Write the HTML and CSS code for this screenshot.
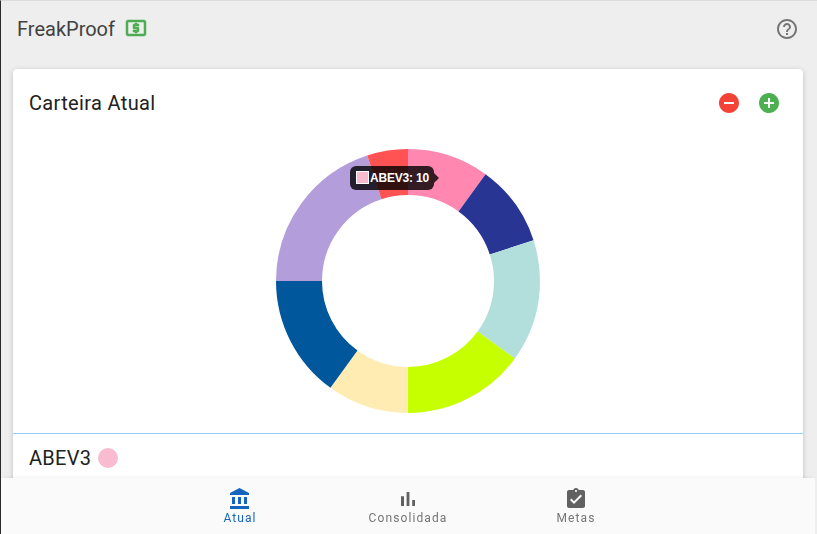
FILE: index.html
```html
<!DOCTYPE html>
<html lang="pt-BR">
<head>
  <meta charset="UTF-8">
  <title>FreakProof</title>
  <link rel="stylesheet" href="styles.css">
</head>
<body>

  <header class="topbar">
    <div class="brand">
      <span class="brand-name">FreakProof</span>
      <svg class="brand-icon" viewBox="0 0 24 24"><path d="M20 4H4c-1.1 0-2 .9-2 2v12c0 1.1.9 2 2 2h16c1.1 0 2-.9 2-2V6c0-1.100-.9-2-2-2zm0 14H4V6h16v12z"/><path d="M11 17h2v-1h1c.55 0 1-.45 1-1v-3c0-.55-.45-1-1-1h-3v-1h4V8h-2V7h-2v1h-1c-.55 0-1 .45-1 1v3c0 .55.45 1 1 1h3v1H9v2h2v1z"/></svg>
    </div>
    <svg class="help-icon" viewBox="0 0 24 24"><path d="M11 18h2v-2h-2v2zm1-16C6.48 2 2 6.48 2 12s4.48 10 10 10 10-4.48 10-10S17.52 2 12 2zm0 18c-4.41 0-8-3.59-8-8s3.59-8 8-8 8 3.59 8 8-3.59 8-8 8zm0-14c-2.21 0-4 1.79-4 4h2c0-1.1.9-2 2-2s2 .9 2 2c0 2-3 1.75-3 5h2c0-2.25 3-2.5 3-5 0-2.21-1.79-4-4-4z"/></svg>
  </header>

  <main class="card">
    <div class="card-head">
      <h2>Carteira Atual</h2>
      <div class="card-actions">
        <svg class="icon-remove" viewBox="0 0 24 24"><path d="M12 2C6.48 2 2 6.48 2 12s4.48 10 10 10 10-4.48 10-10S17.52 2 12 2zm5 11H7v-2h10v2z"/></svg>
        <svg class="icon-add" viewBox="0 0 24 24"><path d="M12 2C6.48 2 2 6.48 2 12s4.48 10 10 10 10-4.48 10-10S17.52 2 12 2zm5 11h-4v4h-2v-4H7v-2h4V7h2v4h4v2z"/></svg>
      </div>
    </div>

    <div class="chart">
      <svg class="donut" viewBox="0 0 264 264">
        <g class="donut-ring">
          <circle class="s1" cx="132" cy="132" r="109" pathLength="100" stroke-dasharray="10 90" stroke-dashoffset="0"/>
          <circle class="s2" cx="132" cy="132" r="109" pathLength="100" stroke-dasharray="10 90" stroke-dashoffset="-10"/>
          <circle class="s3" cx="132" cy="132" r="109" pathLength="100" stroke-dasharray="15 85" stroke-dashoffset="-20"/>
          <circle class="s4" cx="132" cy="132" r="109" pathLength="100" stroke-dasharray="15 85" stroke-dashoffset="-35"/>
          <circle class="s5" cx="132" cy="132" r="109" pathLength="100" stroke-dasharray="10 90" stroke-dashoffset="-50"/>
          <circle class="s6" cx="132" cy="132" r="109" pathLength="100" stroke-dasharray="15 85" stroke-dashoffset="-60"/>
          <circle class="s7" cx="132" cy="132" r="109" pathLength="100" stroke-dasharray="20 80" stroke-dashoffset="-75"/>
          <circle class="s8" cx="132" cy="132" r="109" pathLength="100" stroke-dasharray="5 95" stroke-dashoffset="-95"/>
        </g>
      </svg>
      <div class="tooltip">
        <span class="tooltip-swatch"></span>
        <span>ABEV3: 10</span>
      </div>
    </div>

    <div class="detail">
      <span class="detail-name">ABEV3</span>
      <span class="detail-dot"></span>
    </div>
  </main>

  <nav class="bottom-nav">
    <div class="nav-item active">
      <svg viewBox="0 0 24 24"><path d="M4 10v7h3v-7H4zm6 0v7h3v-7h-3zM2 22h19v-3H2v3zm14-12v7h3v-7h-3zm-4.500-9L2 6v2h19V6l-9.500-5z"/></svg>
      <span>Atual</span>
    </div>
    <div class="nav-item">
      <svg viewBox="0 0 24 24"><path d="M5 9.200h3V19H5V9.200zM10.600 5h2.800v14h-2.800V5zm5.600 8H19v6h-2.800v-6z"/></svg>
      <span>Consolidada</span>
    </div>
    <div class="nav-item">
      <svg viewBox="0 0 24 24"><path d="M19 3h-4.180C14.400 1.840 13.300 1 12 1c-1.300 0-2.400.84-2.820 2H5c-1.100 0-2 .9-2 2v14c0 1.100.9 2 2 2h14c1.100 0 2-.9 2-2V5c0-1.100-.9-2-2-2zm-7 0c.55 0 1 .45 1 1s-.45 1-1 1-1-.45-1-1 .45-1 1-1zm-2 14l-4-4 1.410-1.410L10 14.170l6.590-6.590L18 9l-8 8z"/></svg>
      <span>Metas</span>
    </div>
  </nav>

</body>
</html>
```

FILE: styles.css
```css
html, body {
  height: 100%;
}
body {
  margin: 0;
  height: 534px;
  overflow: hidden;
  display: flex;
  flex-direction: column;
  font-family: Roboto, 'Liberation Sans', sans-serif;
  background-color: #eeeeee;
  border-left: 1px solid #2b2b2b;
  border-top: 1px solid #dadce0;
  box-sizing: border-box;
  color: #212121;
}
.topbar {
  height: 59px;
  flex: none;
  padding: 0 18px 3px 16px;
  box-sizing: border-box;
  display: flex;
  align-items: center;
  justify-content: space-between;
}
.brand {
  display: flex;
  align-items: center;
  gap: 9px;
}
.brand-name {
  font-size: 20px;
  color: #424242;
}
.brand-icon {
  width: 24px;
  height: 24px;
  fill: #4caf50;
  stroke: #4caf50;
  stroke-width: 0.5;
  margin-top: -2px;
}
.help-icon {
  width: 24px;
  height: 24px;
  fill: #757575;
}
.card {
  flex: 1;
  margin: 9px 14px 0 12px;
  background-color: white;
  border-radius: 4px 4px 0 0;
  box-shadow: 0 1px 5px rgba(0,0,0,0.2);
  min-height: 0;
  overflow: hidden;
}
.card-head {
  height: 68px;
  padding: 0 22px 0 16px;
  display: flex;
  align-items: center;
  justify-content: space-between;
}
.card-head h2 {
  margin: 0;
  font-size: 20px;
  font-weight: 400;
  letter-spacing: 0.35px;
}
.card-actions {
  display: flex;
  gap: 16px;
}
.card-actions svg {
  width: 24px;
  height: 24px;
}
.icon-remove {
  fill: #f44336;
}
.icon-add {
  fill: #4caf50;
}
.chart {
  position: relative;
  height: 297px;
  padding-top: 12px;
  box-sizing: border-box;
  display: flex;
  justify-content: center;
  border-bottom: 1px solid #90caf9;
}
.donut {
  width: 264px;
  height: 264px;
}
.donut-ring {
  transform: rotate(-90deg);
  transform-origin: 132px 132px;
}
.donut circle {
  fill: none;
  stroke-width: 46;
}
.s1 { stroke: #ff87b0; }
.s2 { stroke: #283593; }
.s3 { stroke: #b2dfdb; }
.s4 { stroke: #c6ff00; }
.s5 { stroke: #ffecb3; }
.s6 { stroke: #01579b; }
.s7 { stroke: #b39ddb; }
.s8 { stroke: #ff5252; }
.tooltip {
  position: absolute;
  left: 337px;
  top: 29px;
  height: 24px;
  padding: 0 5px 1px 6px;
  box-sizing: border-box;
  display: flex;
  align-items: center;
  gap: 1px;
  background: rgba(0,0,0,0.8);
  border-radius: 6px;
  color: white;
  font-family: 'Liberation Sans', Arial, sans-serif;
  font-size: 12px;
  font-weight: 700;
  letter-spacing: -0.2px;
}
.tooltip::after {
  content: "";
  position: absolute;
  left: 100%;
  top: 7px;
  border: 5px solid transparent;
  border-left-color: rgba(0,0,0,0.8);
}
.tooltip-swatch {
  width: 13px;
  height: 13px;
  box-sizing: border-box;
  background-color: #f8bbd0;
  border: 1px solid white;
}
.detail {
  padding: 12px 16px;
  display: flex;
  align-items: center;
  gap: 7px;
}
.detail-name {
  font-size: 20px;
  letter-spacing: 0.3px;
}
.detail-dot {
  width: 20px;
  height: 20px;
  border-radius: 50%;
  background-color: #f8bbd0;
}
.bottom-nav {
  position: fixed;
  left: 1px;
  right: 2px;
  bottom: 0;
  height: 56px;
  background-color: #fafafa;
  box-shadow: 0 -3px 3px -2px rgba(0,0,0,0.06);
  display: flex;
  justify-content: center;
}
.nav-item {
  width: 168px;
  padding-top: 9px;
  box-sizing: border-box;
  display: flex;
  flex-direction: column;
  align-items: center;
  font-size: 12px;
  letter-spacing: 1.1px;
  color: #757575;
}
.nav-item svg {
  width: 24px;
  height: 24px;
  fill: #616161;
}
.nav-item.active {
  color: #1565c0;
}
.nav-item.active svg {
  fill: #1565c0;
}
```
